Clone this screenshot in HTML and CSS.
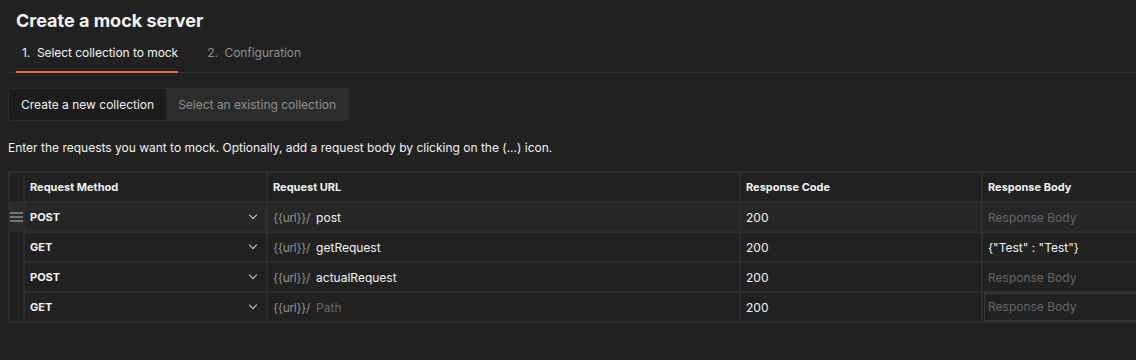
FILE: index.html
```html
<!DOCTYPE html>
<html lang="en">
<head>
    <meta charset="UTF-8">
    <meta name="viewport" content="width=device-width, initial-scale=1.0">
    <title>Create a mock server</title>
    <link rel="stylesheet" href="styles.css">
</head>
<body>
    <div class="page">
        <h1 class="title">Create a mock server</h1>

        <div class="steps">
            <div class="step active">1.&nbsp; Select collection to mock</div>
            <div class="step">2.&nbsp; Configuration</div>
        </div>

        <div class="segment">
            <div class="seg active">Create a new collection</div>
            <div class="seg">Select an existing collection</div>
        </div>

        <p class="hint">Enter the requests you want to mock. Optionally, add a request body by clicking on the (...) icon.</p>

        <div class="grid-wrap">
            <table class="mock-table">
                <colgroup>
                    <col class="c-handle">
                    <col class="c-method">
                    <col class="c-url">
                    <col class="c-code">
                    <col class="c-body">
                </colgroup>
                <thead>
                    <tr>
                        <th class="handle"></th>
                        <th>Request Method</th>
                        <th>Request URL</th>
                        <th>Response Code</th>
                        <th>Response Body</th>
                    </tr>
                </thead>
                <tbody>
                    <tr class="hover">
                        <td class="handle">
                            <svg width="13" height="10" viewBox="0 0 13 10"><path d="M0 1h13M0 5h13M0 9h13" stroke="#8f8f8f" stroke-width="1.6"/></svg>
                        </td>
                        <td><div class="method">POST <span class="chev"></span></div></td>
                        <td><span class="base">{{url}}/</span><span class="path">post</span></td>
                        <td>200</td>
                        <td class="ph">Response Body</td>
                    </tr>
                    <tr>
                        <td class="handle"></td>
                        <td><div class="method">GET <span class="chev"></span></div></td>
                        <td><span class="base">{{url}}/</span><span class="path">getRequest</span></td>
                        <td>200</td>
                        <td>{"Test" : "Test"}</td>
                    </tr>
                    <tr>
                        <td class="handle"></td>
                        <td><div class="method">POST <span class="chev"></span></div></td>
                        <td><span class="base">{{url}}/</span><span class="path">actualRequest</span></td>
                        <td>200</td>
                        <td class="ph">Response Body</td>
                    </tr>
                    <tr>
                        <td class="handle"></td>
                        <td><div class="method">GET <span class="chev"></span></div></td>
                        <td><span class="base">{{url}}/</span><span class="path ph">Path</span></td>
                        <td>200</td>
                        <td class="ph"><div class="focus">Response Body</div></td>
                    </tr>
                </tbody>
            </table>
        </div>
    </div>
</body>
</html>
```

FILE: styles.css
```css
body {
    margin: 0;
    background: #212121;
    color: #f2f2f2;
    font-family: Inter, "Noto Sans", sans-serif;
    font-size: 12px;
    overflow: hidden;
}
.page {
    padding: 8px 0 0 8px;
}
.title {
    margin: 0 0 0 8px;
    font-size: 18px;
    font-weight: 700;
    line-height: 26px;
}
.steps {
    display: flex;
    margin-top: 8px;
    border-bottom: 1px solid #333;
}
.step {
    padding: 3px 0 10px 6px;
    margin-left: 8px;
    margin-right: 15px;
    color: #8f8f8f;
    line-height: 16px;
    letter-spacing: -0.05px;
}
.step.active {
    color: #f2f2f2;
    border-bottom: 2px solid #e46c3a;
    margin-bottom: -1px;
}
.segment {
    display: inline-flex;
    margin-top: 15px;
    padding: 1px;
    background: #2c2c2c;
    border-radius: 4px;
}
.seg {
    padding: 0 12px;
    line-height: 31px;
    color: #8f8f8f;
}
.seg.active {
    background: #1c1c1c;
    color: #f2f2f2;
    border-radius: 3px 0 0 3px;
}
.hint {
    margin: 19px 0 15px 0;
    line-height: 16px;
}
.grid-wrap {
    width: 1400px;
}
.mock-table {
    border-collapse: collapse;
    table-layout: fixed;
    width: 1300px;
}
.c-handle { width: 15px; }
.c-method { width: 243px; }
.c-url { width: 473px; }
.c-code { width: 242px; }
.c-body { width: 327px; }
.mock-table th,
.mock-table td {
    border: 2px solid #2d2d2d;
    height: 28px;
    padding: 0 5px;
    text-align: left;
    white-space: nowrap;
}
.mock-table th {
    font-size: 11px;
    font-weight: 700;
}
.mock-table td.handle,
.mock-table th.handle {
    padding: 0;
    text-align: center;
}
.mock-table tbody td.handle {
    border-top-color: transparent;
    border-bottom-color: transparent;
}
.mock-table tbody tr:first-child td.handle {
    border-top-color: #2d2d2d;
}
.mock-table tbody tr:last-child td.handle {
    border-bottom-color: #2d2d2d;
}
.mock-table tr.hover td {
    background: #262626;
}
.mock-table tr.hover td.handle {
    background: #2b2b2b;
}
.handle svg {
    display: block;
    margin: 0 auto;
}
.method {
    display: flex;
    justify-content: space-between;
    align-items: center;
    font-size: 11px;
    font-weight: 700;
    padding-right: 5px;
}
.chev {
    width: 5px;
    height: 5px;
    border-right: 1.3px solid #cfcfcf;
    border-bottom: 1.3px solid #cfcfcf;
    transform: rotate(45deg);
    margin-top: -4px;
}
.base {
    color: #8f8f8f;
    margin-right: 6px;
    letter-spacing: -0.3px;
}
.ph {
    color: #666;
}
.mock-table td.ph .focus {
    margin: 0 -4px;
    padding: 0 3px;
    line-height: 26px;
    border: 1px solid #383838;
}
```
